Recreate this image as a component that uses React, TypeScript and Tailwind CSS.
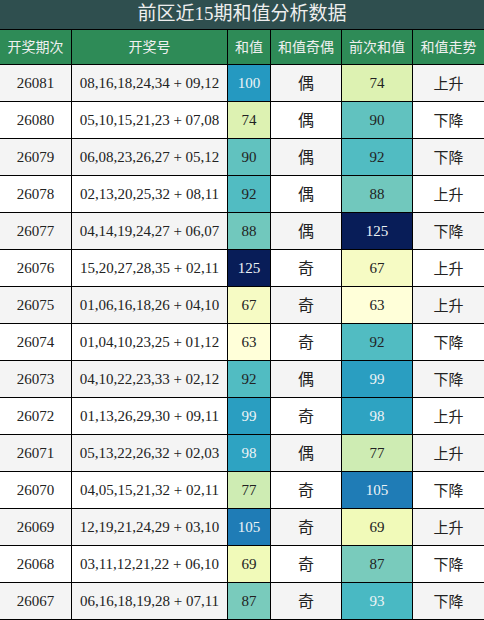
const rows: [string, string, number, string, number, string][] = [
  ["26081", "08,16,18,24,34 + 09,12", 100, "偶", 74, "上升"],
  ["26080", "05,10,15,21,23 + 07,08", 74, "偶", 90, "下降"],
  ["26079", "06,08,23,26,27 + 05,12", 90, "偶", 92, "下降"],
  ["26078", "02,13,20,25,32 + 08,11", 92, "偶", 88, "上升"],
  ["26077", "04,14,19,24,27 + 06,07", 88, "偶", 125, "下降"],
  ["26076", "15,20,27,28,35 + 02,11", 125, "奇", 67, "上升"],
  ["26075", "01,06,16,18,26 + 04,10", 67, "奇", 63, "上升"],
  ["26074", "01,04,10,23,25 + 01,12", 63, "奇", 92, "下降"],
  ["26073", "04,10,22,23,33 + 02,12", 92, "偶", 99, "下降"],
  ["26072", "01,13,26,29,30 + 09,11", 99, "奇", 98, "上升"],
  ["26071", "05,13,22,26,32 + 02,03", 98, "偶", 77, "上升"],
  ["26070", "04,05,15,21,32 + 02,11", 77, "奇", 105, "下降"],
  ["26069", "12,19,21,24,29 + 03,10", 105, "奇", 69, "上升"],
  ["26068", "03,11,12,21,22 + 06,10", 69, "奇", 87, "下降"],
  ["26067", "06,16,18,19,28 + 07,11", 87, "奇", 93, "下降"],
];

// YlGnBu scale, 63 -> 125
const heat: Record<number, string> = {
  63: "bg-[#ffffd9] text-[#222]",
  67: "bg-[#f6fbc4] text-[#222]",
  69: "bg-[#f1fab9] text-[#222]",
  74: "bg-[#ddf2b2] text-[#222]",
  77: "bg-[#ceecb3] text-[#222]",
  87: "bg-[#79cbbc] text-[#222]",
  88: "bg-[#71c8bd] text-[#222]",
  90: "bg-[#61c2bf] text-[#222]",
  92: "bg-[#51bcc2] text-[#222]",
  93: "bg-[#49b9c3] text-[#eef4f6]",
  98: "bg-[#2ea3c2] text-[#eef4f6]",
  99: "bg-[#2a9ec1] text-[#eef4f6]",
  100: "bg-[#2599c1] text-[#eef4f6]",
  105: "bg-[#1f7cb6] text-[#eef4f6]",
  125: "bg-[#081d58] text-[#eef4f6]",
};

const cols = "grid grid-cols-[72px_156px_43px_71px_71px_71px]";
const cell = "flex items-center justify-center border-r border-black";

export default function App() {
  return (
    <div className="w-[484px] bg-white font-['Liberation_Serif','Noto_Sans_CJK_SC',serif]">
      <div className="flex h-[30px] items-center justify-center border-b border-black bg-[#2f4f4f] text-[19px] text-[#eeeeee]">
        前区近15期和值分析数据
      </div>

      <div className={`${cols} h-[35px] border-b border-black bg-[#2e8b57] text-[14px] text-[#f0f0f0]`}>
        <div className={cell}>开奖期次</div>
        <div className={cell}>开奖号</div>
        <div className={cell}>和值</div>
        <div className={cell}>和值奇偶</div>
        <div className={cell}>前次和值</div>
        <div className="flex items-center justify-center">和值走势</div>
      </div>

      {rows.map(([issue, nums, sum, parity, prev, trend], i) => (
        <div
          key={issue}
          className={`${cols} h-[37px] border-b border-black text-[15px] text-[#222] ${
            i % 2 === 0 ? "bg-[#f4f4f4]" : "bg-white"
          }`}
        >
          <div className={`${cell} pt-px`}>{issue}</div>
          <div className={`${cell} pt-px`}>{nums}</div>
          <div className={`${cell} pt-px ${heat[sum]}`}>{sum}</div>
          <div className={`${cell} pt-0.5 text-[16px]`}>{parity}</div>
          <div className={`${cell} pt-px ${heat[prev]}`}>{prev}</div>
          <div className="flex items-center justify-center pt-0.5">{trend}</div>
        </div>
      ))}
    </div>
  );
}
